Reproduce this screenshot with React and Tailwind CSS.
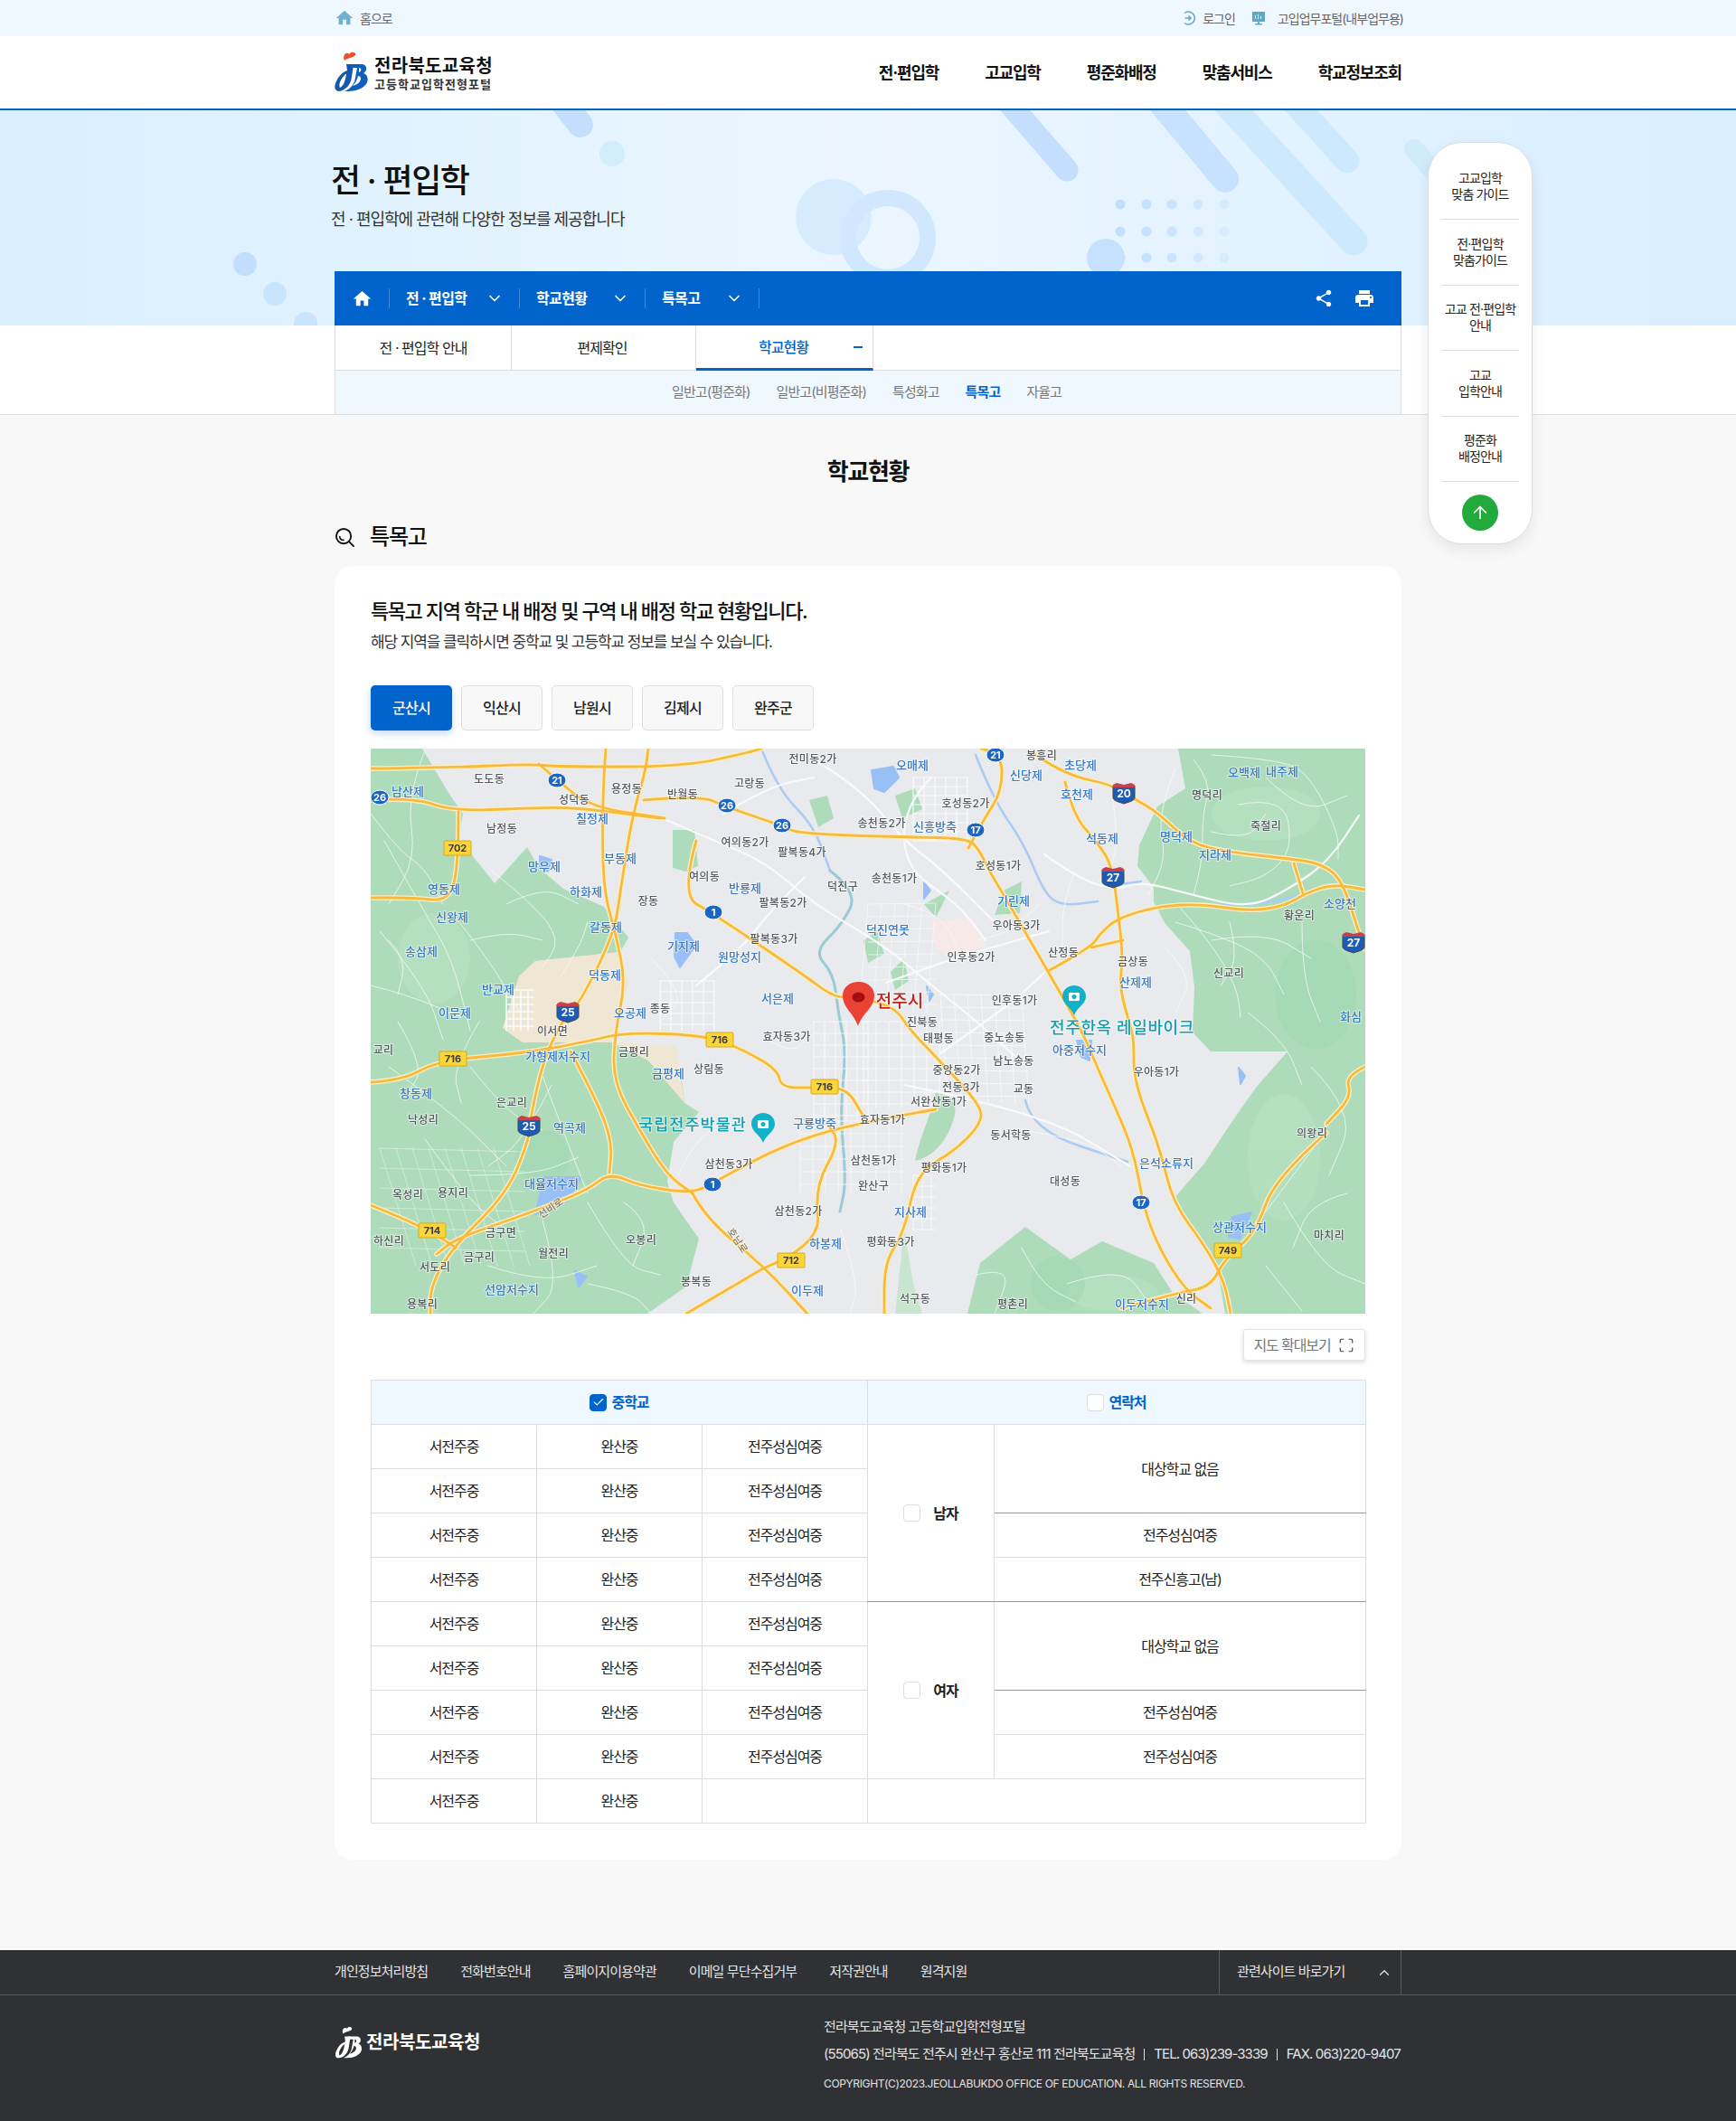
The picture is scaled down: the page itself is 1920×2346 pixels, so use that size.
import { ChevronDown, ChevronUp, ArrowUp, Check, Maximize } from 'lucide-react';
import { MdHome, MdShare, MdLocalPrintshop } from 'react-icons/md';

const SIDE_MENU = [
  ['고교입학', '맞춤 가이드'],
  ['전·편입학', '맞춤가이드'],
  ['고교 전·편입학', '안내'],
  ['고교', '입학안내'],
  ['평준화', '배정안내'],
];

const BREADCRUMB = [
  { label: '전 · 편입학', w: 'w-[144px]' },
  { label: '학교현황', w: 'w-[139px]' },
  { label: '특목고', w: 'w-[126px]' },
];

const FOOTER_LINKS = ['개인정보처리방침', '전화번호안내', '홈페이지이용약관', '이메일 무단수집거부', '저작권안내', '원격지원'];
const CITY_TABS = ['군산시', '익산시', '남원시', '김제시', '완주군'];

// 지도 라벨 (page coordinates, svg viewBox follows the page)
const BLUE_LABELS = [
  ['남산제', 451, 876], ['칠정제', 655, 906], ['망우제', 602, 959], ['부동제', 686, 950], ['하화제', 648, 987],
  ['영동제', 491, 984], ['신왕제', 500, 1015], ['송삼제', 466, 1053], ['갈동제', 670, 1026], ['반룡제', 824, 983],
  ['기지제', 756, 1047], ['원망성지', 818, 1059], ['덕진연못', 982, 1029], ['덕동제', 669, 1079], ['반교제', 551, 1095],
  ['이문제', 503, 1121], ['서은제', 860, 1105], ['오공제', 697, 1121], ['가형제저수지', 617, 1169], ['금평제', 739, 1188],
  ['창동제', 460, 1210], ['역곡제', 630, 1248], ['구룡방죽', 901, 1243], ['신흥방축', 1034, 915], ['오매제', 1009, 847],
  ['초당제', 1195, 847], ['호천제', 1191, 879], ['신당제', 1135, 858], ['오백제', 1376, 855], ['내주제', 1418, 854],
  ['명덕제', 1301, 926], ['석동제', 1219, 928], ['지라제', 1344, 946], ['기린제', 1121, 997], ['소양천', 1482, 1000],
  ['산제제', 1256, 1087], ['화심', 1494, 1125], ['아중저수지', 1194, 1162], ['은석소류지', 1290, 1287], ['지사제', 1007, 1341],
  ['상관저수지', 1371, 1358], ['하봉제', 913, 1376], ['이두제', 893, 1428], ['대율저수지', 610, 1310], ['선암저수지', 566, 1427],
  ['이두저수지', 1263, 1443],
];

const GRAY_LABELS = [
  ['도도동', 541, 862], ['용정동', 693, 873], ['성덕동', 635, 885], ['반월동', 755, 879], ['고랑동', 829, 867],
  ['전미동2가', 899, 840], ['남정동', 555, 917], ['호성동2가', 1068, 889], ['송천동2가', 975, 911], ['여의동2가', 824, 932],
  ['팔복동4가', 887, 943], ['여의동', 779, 970], ['송천동1가', 989, 972], ['덕진구', 932, 981], ['장동', 717, 997],
  ['팔복동2가', 866, 999], ['팔복동3가', 856, 1039], ['인후동2가', 1074, 1059], ['종동', 730, 1116], ['이서면', 611, 1141],
  ['효자동3가', 870, 1147], ['금평리', 701, 1164], ['상림동', 784, 1183], ['은교리', 566, 1220], ['낙성리', 468, 1239],
  ['교리', 424, 1162], ['중앙동2가', 1058, 1184], ['전동3가', 1063, 1203], ['서완산동1가', 1038, 1219], ['효자동1가', 976, 1239],
  ['진북동', 1020, 1131], ['태평동', 1038, 1149], ['봉흥리', 1152, 836], ['명덕리', 1335, 880], ['죽절리', 1400, 914],
  ['호성동1가', 1104, 958], ['우아동3가', 1124, 1024], ['황운리', 1437, 1013], ['산정동', 1176, 1054], ['금상동', 1253, 1064],
  ['신교리', 1359, 1077], ['인후동1가', 1122, 1107], ['우아동1가', 1279, 1186], ['남노송동', 1121, 1174], ['중노송동', 1111, 1148],
  ['교동', 1132, 1205], ['의왕리', 1451, 1254], ['동서학동', 1118, 1256], ['대성동', 1178, 1307], ['삼천동3가', 806, 1288],
  ['삼천동1가', 966, 1284], ['평화동1가', 1044, 1292], ['완산구', 966, 1312], ['삼천동2가', 883, 1340], ['마치리', 1470, 1367],
  ['평화동3가', 985, 1374], ['오봉리', 709, 1372], ['봉복동', 770, 1418], ['석구동', 1012, 1437], ['용복리', 467, 1443],
  ['평촌리', 1120, 1443], ['서도리', 481, 1402], ['금구리', 530, 1391], ['월전리', 612, 1387], ['금구면', 554, 1364],
  ['하신리', 430, 1373], ['옥성리', 451, 1322], ['용지리', 501, 1320], ['신리', 1312, 1437],
];

const ROADS = [
  '410,850 500,849 587,845 614,848 757,848 829,832 842,828',
  '670,828 668,853 666,920 668,987 681,1033 692,1087 680,1143 678,1197 709,1253 738,1300 766,1320',
  '717,828 715,850 699,903 686,987 679,1033 641,1110 628,1119 601,1170 585,1245 585,1260 561,1320 500,1380 476,1423 476,1453',
  '410,885 458,882 503,898 614,892 668,897 730,905',
  '712,885 775,880 802,892 864,913 882,922 1000,926 1070,927 1083,940 1095,965 1115,998 1158,1073 1184,1118 1201,1150 1212,1177 1230,1217 1254,1273 1265,1337 1283,1383 1311,1427 1339,1447',
  '596,845 616,863 654,893 735,905',
  '507,898 507,960 496,997 458,993 410,993',
  '770,930 753,990 788,1010 887,1077 922,1103 945,1103 989,1113 1007,1140 1039,1173 1085,1223 1085,1243 1056,1273 1014,1297 1000,1363 978,1397 978,1453',
  '410,1197 445,1195 485,1173 579,1165 650,1152 690,1142 779,1145 820,1160 860,1183 864,1203 900,1203 936,1203 954,1233',
  '1035,1227 943,1243 865,1267 791,1307 766,1320 709,1312 674,1297 649,1317 582,1343 504,1370 483,1387',
  '766,1320 780,1347 844,1400 893,1453',
  '844,1403 908,1377 901,1313 929,1263 915,1243',
  '844,1403 759,1453',
  '410,1333 469,1357 504,1380',
  '631,1163 660,1217 677,1263 674,1297',
  '1467,1253 1410,1303 1389,1363 1354,1393 1339,1423 1304,1430 1240,1447',
  '1510,1180 1488,1190 1495,1213 1467,1243',
  '1085,828 1108,832 1108,875 1089,905 1071,938',
  '1145,835 1178,857 1230,868 1253,883 1280,898 1316,933 1362,943 1428,950 1460,955 1484,972 1503,1032 1510,1050',
  '1178,865 1187,902 1214,932 1230,958 1237,1012 1242,1058 1238,1092 1250,1135 1254,1150 1254,1197 1283,1270 1297,1330 1332,1377 1354,1417 1361,1453',
  '1161,1073 1207,1048 1217,1032 1237,1015 1283,1002 1329,1000 1382,1008 1421,1002 1444,988 1474,978 1510,984',
  '1431,955 1441,988',
  '1207,1048 1242,1040',
];

const WATER = [
  '842,828 860,873 900,913 918,963',
  '1079,835 1099,885 1132,932 1155,988 1174,1002 1214,997',
  '1134,1217 1141,1250 1247,1285',
  '1225,980 1262,975',
  '1438,990 1400,1000 1350,1000',
];

const RIVER = '918,963 949,987 931,1023 900,1053 922,1077 927,1120 936,1163 929,1230 936,1307 929,1340';

const WHITE_MAJOR = [
  '735,906 790,930 846,953 900,1000 980,1047 1030,1090 1075,1125 1130,1175',
  '980,1087 1040,1065 1100,1047 1160,1030',
  '1158,1073 1130,1100 1090,1130 1040,1165',
  '1155,945 1187,968 1230,985 1263,975 1312,988 1381,1005 1428,982 1470,952 1503,902',
  '1030,860 1000,890 1000,960 1060,1000 1090,1040',
  '900,840 950,870 1000,930 1040,960 1100,1020',
  '800,900 850,870 900,860',
  '1000,1200 1150,1230 1250,1290',
  '770,1090 820,1050 850,1010 890,970',
];

const WHITE_MINOR = [
  '1306,1005 1339,1042 1368,1092 1372,1125', '1340,835 1420,840 1450,860 1480,920 1480,950',
  '1320,840 1340,865 1330,900 1330,950 1320,990', '1300,850 1280,900 1290,950 1270,990',
  '1370,890 1420,880 1430,940 1400,970 1360,980', '1300,1020 1350,1035 1400,1060 1420,1100',
  '1440,1020 1440,1080 1460,1130', '1187,968 1175,1000 1175,1050', '1230,880 1240,940 1215,975',
  '1150,1000 1120,1030 1080,1040', '1450,1180 1500,1230 1470,1300', '1420,1330 1460,1400 1510,1420',
  '1080,1410 1120,1400 1100,1453', '1180,1420 1240,1400 1270,1440', '1400,1400 1440,1450',
  '470,830 450,880 460,950 430,1000', '425,930 470,1010 500,1060 520,1140', '500,1010 540,1060 575,1120',
  '420,1030 470,1090 490,1150', '540,960 590,1000 620,1040 600,1070', '560,1000 600,980 640,1000',
  '410,1090 450,1100 510,1125', '430,1180 500,1230 560,1290', '520,1180 560,1230 600,1250',
  '600,1190 630,1270 650,1320', '650,1330 690,1400 730,1410', '540,1400 600,1420 660,1400',
  '600,1350 620,1420 590,1453', '520,1300 590,1300 640,1280', '470,1260 520,1330 560,1360',
  '720,1060 760,1100 730,1130', '930,1360 950,1420 940,1453', '800,1240 770,1260 750,1300',
  '1130,1250 1200,1260 1240,1290', '1000,1000 1040,1010 1060,1050', '850,1150 880,1170 900,1130',
  '410,900 440,940 470,960 490,1000', '430,1040 450,1060 440,1100', '520,1040 560,1030 600,1040',
  '530,1130 500,1180 510,1220', '440,1130 470,1180 450,1210', '610,1200 580,1260 540,1290',
  '620,1080 640,1050 650,1020', '690,1330 720,1350 700,1400', '650,1420 700,1430 720,1453',
  '1340,1040 1400,1030 1450,1060', '1380,1120 1420,1150 1440,1200', '1460,1260 1430,1300 1400,1340',
  '1490,1320 1450,1330 1430,1380', '1360,1020 1370,1060 1350,1090', '1400,860 1440,900 1490,880',
  '1340,920 1380,930 1400,900', '1290,1050 1320,1080 1300,1120', '1130,1380 1150,1420 1190,1440',
];

const grid = (x0, y0, x1, y1, sx, sy, skew = 0) => {
  let d = '';
  for (let x = x0; x <= x1; x += sx) d += `M${x} ${y0}L${x + skew} ${y1}`;
  for (let y = y0; y <= y1; y += sy) d += `M${x0} ${y}L${x1 + skew * 0.5} ${y + skew * 0.1}`;
  return d;
};

const curve = (s) => {
  const p = s.split(' ').map((q) => q.split(',').map(Number));
  let d = `M${p[0][0]} ${p[0][1]}`;
  for (let i = 1; i < p.length - 1; i++) {
    const mx = (p[i][0] + p[i + 1][0]) / 2;
    const my = (p[i][1] + p[i + 1][1]) / 2;
    d += `Q${p[i][0]} ${p[i][1]} ${mx} ${my}`;
  }
  const last = p[p.length - 1];
  return `${d}L${last[0]} ${last[1]}`;
};

function Logo({ white = false }) {
  return (
    <svg viewBox="0 0 37 44" className="w-[37px] h-[44px] shrink-0">
      <path d="M11 10C9 6 11 1 15 2C16 3 17 3 18 1C22 0 25 3 22 5C19 7 14 7 11 10Z" fill={white ? '#fff' : '#e8502a'} />
      <path d="M13 14H21L19 28C18 37 12 43 5 44C0 44 -1 39 2 33C5 26 9 23 14 21Z" fill={white ? '#fff' : '#1557ad'} />
      <path d="M12 25C7 30 4 36 6 40C10 38 12 32 13 25Z" fill={white ? '#303134' : '#fff'} />
      <path d="M18 14H30C36 14 37 21 32 24C38 26 38 34 33 38C28 43 20 44 11 44C18 41 22 36 23 29L25 18H18Z" fill={white ? '#fff' : '#0f5fbd'} />
      <path d="M26 27C29 27 30 30 28 33C27 35 24 37 20 38C23 35 25 31 26 27Z" fill={white ? '#303134' : '#fff'} />
      <path d="M27 18C30 18 30 22 27 23Z" fill={white ? '#303134' : '#fff'} />
    </svg>
  );
}

function HeroShapes() {
  const xs = [1239, 1268, 1296, 1325, 1354];
  const ops = [0.9, 0.8, 0.65, 0.45, 0.3];
  return (
    <svg viewBox="0 122 1920 238" className="absolute inset-0 w-full h-full" fill="none" strokeLinecap="round">
      <path d="M612 100L642 138" stroke="#c3dffd" strokeWidth="28" />
      <circle cx="677" cy="170" r="14" fill="#d2ecfc" />
      <circle cx="922" cy="240" r="42" fill="#d6ebfd" />
      <circle cx="982" cy="263" r="44" stroke="#d1e7fd" strokeWidth="18" />
      <path d="M1095 90L1180 188" stroke="#c4dffd" strokeWidth="25" />
      <path d="M1265 90L1355 198" stroke="#c6e2fe" strokeWidth="30" />
      <path d="M1335 90L1497 267" stroke="#cde9fd" strokeWidth="31" />
      <path d="M1410 90L1490 178" stroke="#cde9fd" strokeWidth="27" />
      <path d="M1564 165L1640 250" stroke="#cfebfc" strokeWidth="22" />
      {[226, 256, 285].flatMap((y) =>
        xs.map((x, i) => <circle key={`${x}-${y}`} cx={x} cy={y} r="5.5" fill="#bcdcfd" opacity={ops[i]} />)
      )}
      <circle cx="1223" cy="285" r="21" fill="#c6e1fd" />
      <circle cx="271" cy="292" r="13" fill="#c2defd" />
      <circle cx="304" cy="325" r="13" fill="#c9e4fd" />
      <circle cx="338" cy="358" r="13" fill="#c9e4fd" />
    </svg>
  );
}

const Circle = ({ x, y, n }) => (
  <g>
    <ellipse cx={x} cy={y} rx="10" ry="8" fill="#1a66c2" stroke="#fff" strokeWidth="1" />
    <text x={x} y={y + 4} textAnchor="middle" fontSize="11" fontWeight="700" fill="#fff">{n}</text>
  </g>
);

const Shield = ({ x, y, n }) => (
  <g>
    <path d={`M${x - 12} ${y - 8}H${x + 12}V${y + 5}C${x + 12} ${y + 9} ${x + 5} ${y + 10} ${x} ${y + 12}C${x - 5} ${y + 10} ${x - 12} ${y + 9} ${x - 12} ${y + 5}Z`} fill="#1d5cb4" stroke="#444" strokeWidth="1" />
    <path d={`M${x - 12} ${y - 6}V${y - 9}L${x - 8} ${y - 11}L${x} ${y - 9}L${x + 8} ${y - 11}L${x + 12} ${y - 9}V${y - 6}Z`} fill="#c8404a" />
    <text x={x} y={y + 5} textAnchor="middle" fontSize="12" fontWeight="700" fill="#fff">{n}</text>
  </g>
);

const RouteBox = ({ x, y, n }) => (
  <g>
    <rect x={x - 15} y={y - 8} width="30" height="16" rx="1" fill="#fcd53a" stroke="#d9aa10" strokeWidth="1" />
    <text x={x} y={y + 4} textAnchor="middle" fontSize="11" fontWeight="700" fill="#3c3c3c">{n}</text>
  </g>
);

const TealPin = ({ x, y }) => (
  <g>
    <path d={`M${x} ${y + 19}C${x - 3} ${y + 10} ${x - 13} ${y + 7} ${x - 13} ${y - 2}C${x - 13} ${y - 9} ${x - 7} ${y - 14} ${x} ${y - 14}C${x + 7} ${y - 14} ${x + 13} ${y - 9} ${x + 13} ${y - 2}C${x + 13} ${y + 7} ${x + 3} ${y + 10} ${x} ${y + 19}Z`} fill="#12b0c9" />
    <rect x={x - 6} y={y - 6} width="12" height="9" rx="1" fill="#fff" />
    <circle cx={x} cy={y - 1.5} r="2.5" fill="#12b0c9" />
  </g>
);

function MapDrawing() {
  return (
    <svg viewBox="410 828 1100 625" className="block w-[1100px] h-[625px] blur-[0.4px]">
      <rect x="410" y="828" width="1100" height="625" fill="#e8eaed" />

      {/* 녹지 */}
      <g fill="#aedcbb">
        <path d="M410 828H467L498 880L512 900L507 927L547 977L583 937L596 960L623 983L668 1003L695 1037L686 1053L592 1063L574 1080L556 1137L578 1153L677 1153L717 1173L753 1187L757 1220L773 1230L745 1263L738 1307L745 1330L773 1370L759 1423L716 1453H410Z" />
        <path d="M1303 828H1510V1453H1355L1346 1400L1318 1363L1297 1327L1332 1287L1361 1243L1389 1203L1424 1163L1339 1163L1319 1142L1321 1092L1316 1052L1289 1022L1276 998L1276 982L1258 958L1260 935L1280 892L1311 872Z" />
        <path d="M1070 1453L1084 1397L1134 1357L1184 1393L1219 1373L1276 1397L1297 1430L1330 1453Z" />
        <path d="M1035 1207C1050 1210 1062 1220 1054 1240C1046 1265 1030 1280 1012 1284C1016 1260 1030 1235 1035 1207Z" />
        <path d="M744 918H768L772 958L758 964L744 960Z" />
        <path d="M895 885L915 880L922 905L905 915Z" />
        <path d="M990 880L1012 872L1020 895L998 905Z" />
        <path d="M1110 985L1130 975L1128 1010L1100 1012Z" />
        <path d="M955 1040L970 1030L978 1055L960 1065Z" />
        <path d="M985 1075L1000 1060L1005 1085L990 1095Z" />
        <path d="M1022 1000L1050 985L1035 1015Z" />
        <path d="M1000 1360L1010 1420L1020 1453H990Z" fill="#c8e6cf" />
      </g>
      <g fill="#bde4c6" opacity="0.45">
        <ellipse cx="1420" cy="1280" rx="40" ry="70" />
        <ellipse cx="1400" cy="900" rx="60" ry="30" />
        <ellipse cx="1230" cy="1430" rx="50" ry="20" />
        <ellipse cx="480" cy="1060" rx="40" ry="50" />
      </g>
      <g fill="#9bd4ac" opacity="0.4">
        <ellipse cx="1455" cy="1100" rx="45" ry="60" />
        <ellipse cx="1170" cy="1420" rx="30" ry="30" />
        <ellipse cx="600" cy="1280" rx="30" ry="30" />
      </g>
      <path d="M592 1063L686 1053L695 1087L677 1153L748 1157L757 1220L717 1173L677 1153L578 1153L556 1137L574 1080Z" fill="#efe6d3" />
      <path d="M1030 1020L1075 1015L1090 1045L1060 1060L1035 1050Z" fill="#f7e9e8" />

      {/* 물 */}
      <g fill="none" strokeLinecap="round" strokeLinejoin="round" stroke="#a9ccf7">
        {WATER.map((w) => <path key={w} d={curve(w)} strokeWidth="2.5" />)}
        <path d={curve(RIVER)} stroke="#98ccd2" strokeWidth="3" />
      </g>
      <g fill="#98c0f6" stroke="#98c0f6" strokeWidth="2" strokeLinejoin="round">
        <path d="M964 852L988 848L994 860L978 876L967 872Z" />
        <path d="M747 1032L760 1032L770 1045L752 1070L746 1058Z" />
        <path d="M597 947L610 951L606 964L597 959Z" />
        <path d="M602 1302L643 1302L628 1328L592 1343Z" />
        <path d="M636 1406L649 1412L640 1424Z" />
        <path d="M1363 1346L1384 1341L1371 1370L1359 1368Z" />
        <path d="M1191 1151L1207 1151L1205 1173L1196 1169Z" />
        <path d="M1370 1181L1377 1190L1372 1199Z" />
        <path d="M1022 976L1029 985L1022 994Z" />
        <path d="M1025 1091L1032 1100L1028 1107Z" />
      </g>

      {/* 도로망 */}
      <g fill="none" stroke="#f8fafb" strokeLinecap="round" strokeLinejoin="round">
        <path d={grid(960, 1000, 1040, 1120, 15, 14, -10)} strokeWidth="1" opacity="0.7" />
        <path d={grid(1040, 1100, 1130, 1220, 15, 14, 8)} strokeWidth="1" opacity="0.8" />
        <path d={grid(900, 1130, 960, 1240, 12, 13)} strokeWidth="1.2" opacity="0.85" />
        <path d={grid(955, 1130, 1040, 1225, 14, 13)} strokeWidth="1.2" opacity="0.85" />
        <path d={grid(885, 1240, 1000, 1320, 14, 14)} strokeWidth="1" opacity="0.8" />
        <path d={grid(1010, 1300, 1035, 1360, 10, 12)} strokeWidth="1" opacity="0.85" />
        <path d={grid(1010, 860, 1070, 930, 12, 10)} strokeWidth="1.2" />
        <path d={grid(730, 1085, 790, 1140, 12, 12)} strokeWidth="1.2" />
        <path d={grid(560, 1095, 590, 1140, 8, 8)} strokeWidth="1.6" />
        <path d={grid(420, 1270, 560, 1400, 18, 22, 40)} strokeWidth="0.8" opacity="0.55" />
        {WHITE_MAJOR.map((w) => <path key={w} d={curve(w)} strokeWidth="2.2" />)}
        {WHITE_MINOR.map((w) => <path key={w} d={curve(w)} strokeWidth="1" opacity="0.75" />)}
      </g>

      <g fill="none" strokeLinecap="round" strokeLinejoin="round">
        {ROADS.map((r) => <path key={r} d={curve(r)} stroke="#fcefc3" strokeWidth="5.5" />)}
        {ROADS.map((r) => <path key={`o${r}`} d={curve(r)} stroke="#f7ba3e" strokeWidth="2.8" />)}
      </g>

      <g style={{ paintOrder: 'stroke' }} stroke="#ffffff" strokeOpacity="0.55" strokeWidth="2" textAnchor="middle" fontWeight="500">
        {BLUE_LABELS.map(([t, x, y]) => (
          <text key={t + x} x={x} y={y + 4} fontSize="13" fill="#3a79c8">{t}</text>
        ))}
        {GRAY_LABELS.map(([t, x, y]) => (
          <text key={t + x} x={x} y={y + 4} fontSize="12" letterSpacing="0.3" fill="#555b60">{t}</text>
        ))}
        <text x="609" y="1340" fontSize="11" fill="#8c7a55" transform="rotate(-35 609 1336)">선비로</text>
        <text x="816" y="1376" fontSize="11" fill="#8c7a55" transform="rotate(55 816 1372)">호남로</text>
        <text x="766" y="1250" fontSize="17.5" letterSpacing="1" fill="#129eaf">국립전주박물관</text>
        <text x="1241" y="1143" fontSize="18" letterSpacing="0.6" fill="#129eaf">전주한옥 레일바이크</text>
        <text x="995" y="1114" fontSize="19" fill="#c5221f">전주시</text>
      </g>

      <Circle x={616} y={863} n="21" />
      <Circle x={420} y={882} n="26" />
      <Circle x={804} y={891} n="26" />
      <Circle x={865} y={913} n="26" />
      <Circle x={1079} y={918} n="17" />
      <Circle x={1101} y={835} n="21" />
      <Circle x={789} y={1009} n="1" />
      <Circle x={788} y={1310} n="1" />
      <Circle x={1262} y={1330} n="17" />
      <Shield x={628} y={1119} n="25" />
      <Shield x={585} y={1245} n="25" />
      <Shield x={1243} y={877} n="20" />
      <Shield x={1231} y={970} n="27" />
      <Shield x={1497} y={1042} n="27" />
      <RouteBox x={506} y={938} n="702" />
      <RouteBox x={796} y={1150} n="716" />
      <RouteBox x={501} y={1171} n="716" />
      <RouteBox x={912} y={1202} n="716" />
      <RouteBox x={478} y={1361} n="714" />
      <RouteBox x={875} y={1394} n="712" />
      <RouteBox x={1358} y={1383} n="749" />
      <TealPin x={844} y={1245} />
      <TealPin x={1188} y={1104} />
      <path d="M949 1135C944 1120 932 1115 932 1101C932 1092 940 1086 949.5 1086C959 1086 967 1092 967 1101C967 1115 954 1120 949 1135Z" fill="#ea4335" />
      <ellipse cx="949.5" cy="1103" rx="7" ry="5.5" fill="#a50e0e" />
    </svg>
  );
}

function CheckBox({ checked = false }) {
  return (
    <span className={`w-[19px] h-[19px] rounded-[4px] border flex items-center justify-center ${checked ? 'bg-[#0064cc] border-[#0064cc]' : 'bg-white border-[#ddd]'}`}>
      {checked && <Check size={14} color="#fff" strokeWidth={2} />}
    </span>
  );
}

function SchoolTable() {
  const cell = 'h-[49px] p-0 border border-[#ddd] text-center text-[16px] tracking-[-0.065em] text-[#222] font-normal';
  const school = (
    <>
      <td className={cell}>서전주중</td>
      <td className={cell}>완산중</td>
      <td className={cell}>전주성심여중</td>
    </>
  );
  return (
    <table className="mt-[21px] w-[1100px] table-fixed border-collapse">
      <colgroup>
        <col className="w-[183px]" />
        <col className="w-[183px]" />
        <col className="w-[183px]" />
        <col className="w-[140px]" />
        <col className="w-[411px]" />
      </colgroup>
      <thead>
        <tr className="bg-[#f0f8ff]">
          <th colSpan={3} className={cell}>
            <span className="flex items-center justify-center gap-[5px] text-[#0064cc] font-bold">
              <CheckBox checked />
              중학교
            </span>
          </th>
          <th colSpan={2} className={cell}>
            <span className="flex items-center justify-center gap-[5px] text-[#0064cc] font-bold">
              <CheckBox />
              연락처
            </span>
          </th>
        </tr>
      </thead>
      <tbody>
        <tr>
          {school}
          <td rowSpan={4} className={`${cell} border-b-[#999]`}>
            <span className="flex items-center justify-center gap-[14px] font-bold"><CheckBox />남자</span>
          </td>
          <td rowSpan={2} className={`${cell} border-b-[#999]`}>대상학교 없음</td>
        </tr>
        <tr>{school}</tr>
        <tr>{school}<td className={cell}>전주성심여중</td></tr>
        <tr>{school}<td className={`${cell} border-b-[#999]`}>전주신흥고(남)</td></tr>
        <tr>
          {school}
          <td rowSpan={4} className={cell}>
            <span className="flex items-center justify-center gap-[14px] font-bold"><CheckBox />여자</span>
          </td>
          <td rowSpan={2} className={`${cell} border-b-[#999]`}>대상학교 없음</td>
        </tr>
        <tr>{school}</tr>
        <tr>{school}<td className={cell}>전주성심여중</td></tr>
        <tr>{school}<td className={cell}>전주성심여중</td></tr>
        <tr>
          <td className={cell}>서전주중</td>
          <td className={cell}>완산중</td>
          <td className={cell}></td>
          <td colSpan={2} className={cell}></td>
        </tr>
      </tbody>
    </table>
  );
}

export default function App() {
  return (
    <div className="relative bg-[#f8f8f8] font-['Inter','Noto_Sans_CJK_KR',sans-serif] text-[#222] overflow-hidden">
      {/* 상단 유틸 */}
      <div className="h-10 bg-[#eff8ff]">
        <div className="ml-[370px] w-[1182px] h-full flex items-center justify-between text-[14px] tracking-[-0.07em] text-[#666]">
          <div className="flex items-center gap-[6px]">
            <MdHome size={22} color="#6fb1cf" />
            <span>홈으로</span>
          </div>
          <div className="flex items-center">
            <svg viewBox="0 0 18 18" className="w-[18px] h-[18px] mr-[7px]" fill="none" stroke="#5ba9c9" strokeWidth="1.5">
              <path d="M5 3.5A7 7 0 1 1 5 14.5" />
              <path d="M5.5 9H12M9.5 6.5L12 9L9.5 11.5" />
            </svg>
            <span>로그인</span>
            <svg viewBox="0 0 18 18" className="w-[18px] h-[18px] ml-[17px] mr-[12px]" fill="#5ba9c9">
              <path d="M2 2H16V13H2ZM8 13H10V15H13V16.5H5V15H8Z" />
              <path d="M5 10V6H6V10ZM8 10V5H9V10ZM11 10V7H12V10Z" fill="#eff8ff" />
            </svg>
            <span>고입업무포털(내부업무용)</span>
          </div>
        </div>
      </div>

      {/* 헤더 */}
      <header className="h-[82px] bg-white border-b-2 border-[#0064cc]">
        <div className="ml-[370px] w-[1180px] h-full flex items-center justify-between">
          <div className="flex items-center gap-[7px] -mt-[2px]">
            <Logo />
            <div className="whitespace-nowrap pt-[3px]">
              <div className="text-[20px] leading-[24px] font-bold tracking-[0.015em] text-[#111]">전라북도교육청</div>
              <div className="text-[13px] leading-[16px] font-bold tracking-[0.08em] text-[#333]">고등학교입학전형포털</div>
            </div>
          </div>
          <nav className="flex items-center gap-[51px] text-[18px] font-bold tracking-[-0.065em] text-[#111]">
            <span>전·편입학</span>
            <span>고교입학</span>
            <span>평준화배정</span>
            <span>맞춤서비스</span>
            <span>학교정보조회</span>
          </nav>
        </div>
      </header>

      {/* 히어로 */}
      <section className="relative h-[238px] bg-gradient-to-r from-[#d9effe] via-[#ebf6ff] to-[#d9eeff]">
        <HeroShapes />
        <div className="relative ml-[370px] w-[1180px] h-full flex flex-col">
          <h1 className="mt-[56px] -ml-[4px] text-[36px] leading-[44px] font-medium tracking-[-0.04em] text-[#111]">전 · 편입학</h1>
          <p className="mt-[8px] -ml-[4px] text-[18px] leading-[26px] tracking-[-0.055em] text-[#333]">전 · 편입학에 관련해 다양한 정보를 제공합니다</p>
          <div className="mt-auto h-[60px] bg-[#0064cc] flex items-center text-white">
            <div className="w-[61px] h-[22px] flex items-center justify-center border-r border-[#3f8bda]">
              <MdHome size={23} color="#fff" />
            </div>
            {BREADCRUMB.map((b) => (
              <div key={b.label} className={`${b.w} h-[22px] pl-[18px] pr-[17px] flex items-center justify-between border-r border-[#3f8bda] text-[16px] font-bold tracking-[-0.04em]`}>
                <span>{b.label}</span>
                <ChevronDown size={20} color="#fff" strokeWidth={2} />
              </div>
            ))}
            <div className="ml-auto flex items-center gap-[22px] pr-[29px]">
              <MdShare size={22} color="#fff" />
              <MdLocalPrintshop size={24} color="#fff" />
            </div>
          </div>
        </div>
      </section>

      {/* 탭 */}
      <section className="bg-white border-b border-[#ddd] h-[99px]">
        <div className="ml-[370px] w-[1180px] h-full border-x border-[#ddd] flex flex-col">
          <div className="h-[50px] border-b border-[#ddd] flex text-[16px] leading-[26px] tracking-[-0.06em]">
            <div className="w-[195px] flex items-center justify-center border-r border-[#ddd]">전 · 편입학 안내</div>
            <div className="w-[204px] flex items-center justify-center border-r border-[#ddd] pr-[3px]">편제확인</div>
            <div className="relative w-[196px] flex items-center justify-center border-r border-b-[3px] border-r-[#ddd] border-b-[#0064cc] h-[50px] pr-[2px] font-medium text-[#0064cc]">
              학교현황
              <span className="absolute right-[11px] top-[23px] w-[10px] h-[2px] bg-[#0064cc]"></span>
            </div>
          </div>
          <div className="flex-1 bg-[#f0f8ff] flex items-center justify-center gap-[29px] pr-[3px] text-[15px] tracking-[-0.06em] text-[#777]">
            <span>일반고(평준화)</span>
            <span>일반고(비평준화)</span>
            <span>특성화고</span>
            <span className="text-[#0064cc] font-bold">특목고</span>
            <span>자율고</span>
          </div>
        </div>
      </section>

      {/* 본문 */}
      <main className="ml-[370px] w-[1180px]">
        <h2 className="pt-[48px] text-center text-[26px] leading-[30px] font-bold tracking-[-0.05em] text-[#111]">학교현황</h2>
        <div className="mt-[42px] h-[30px] flex items-center gap-[16px]">
          <svg viewBox="0 0 24 24" className="w-[23px] h-[23px]" fill="none" stroke="#111" strokeWidth="2" strokeLinecap="round">
            <circle cx="10.5" cy="10.5" r="8.5" />
            <path d="M16.5 16.5L22 22" />
            <path d="M6 11A4.5 4.5 0 0 0 10.5 15" strokeWidth="1.6" />
          </svg>
          <span className="text-[24px] font-medium tracking-[-0.05em] text-[#111]">특목고</span>
        </div>

        <div className="mt-[17px] bg-white rounded-[20px] pt-[35px] pb-[40px] pl-[40px] pr-[40px]">
          <p className="text-[22px] leading-[30px] font-medium tracking-[-0.065em] text-[#111]">특목고 지역 학군 내 배정 및 구역 내 배정 학교 현황입니다.</p>
          <p className="mt-[7px] text-[17px] leading-[24px] tracking-[-0.065em] text-[#333]">해당 지역을 클릭하시면 중학교 및 고등학교 정보를 보실 수 있습니다.</p>

          <div className="mt-[36px] flex gap-[10px]">
            {CITY_TABS.map((t, i) => (
              <button
                key={t}
                className={`w-[90px] h-[50px] rounded-[5px] text-[16px] font-medium tracking-[-0.05em] ${
                  i === 0
                    ? 'bg-[#0064cc] text-white shadow-[0_3px_8px_rgba(0,100,204,0.25)]'
                    : 'bg-[#f8f8f8] border border-[#ddd] text-[#222]'
                }`}
              >
                {t}
              </button>
            ))}
          </div>

          <div className="mt-[20px]">
            <MapDrawing />
          </div>

          <div className="mt-[17px] w-[1100px] flex justify-end">
            <div className="w-[135px] h-[35px] flex items-center justify-center gap-[9px] bg-white border border-[#e5e5e5] rounded-[3px] shadow-[0_2px_5px_rgba(0,0,0,0.15)] text-[16px] tracking-[-0.07em] text-[#777]">
              지도 확대보기
              <Maximize size={18} color="#444" strokeWidth={1.6} />
            </div>
          </div>

          <SchoolTable />
        </div>
      </main>

      {/* 푸터 */}
      <footer className="mt-[100px] h-[189px] bg-[#303134] text-[#e4e4e4]">
        <div className="h-[50px] border-b border-[#58595c]">
          <div className="ml-[370px] w-[1180px] h-full flex items-center justify-between">
            <div className="flex gap-[36px] text-[15px] tracking-[-0.06em]">
              {FOOTER_LINKS.map((l) => <span key={l}>{l}</span>)}
            </div>
            <div className="w-[202px] h-full pl-[19px] pr-[9px] flex items-center justify-between border-x border-[#58595c] text-[15px] tracking-[-0.06em]">
              관련사이트 바로가기
              <ChevronUp size={18} color="#e4e4e4" strokeWidth={1.6} />
            </div>
          </div>
        </div>
        <div className="ml-[370px] w-[1180px] flex">
          <div className="w-[541px] shrink-0 pt-[3px] flex items-center h-[100px] gap-[1px]">
            <div className="scale-[0.8] -ml-[3px]"><Logo white /></div>
            <span className="text-[20px] font-bold tracking-[-0.02em] text-white">전라북도교육청</span>
          </div>
          <div className="whitespace-nowrap">
            <p className="mt-[24px] text-[15px] leading-[22px] tracking-[-0.06em]">전라북도교육청 고등학교입학전형포털</p>
            <p className="mt-[8px] text-[15px] leading-[22px] tracking-[-0.06em] flex items-center">
              (55065) 전라북도 전주시 완산구 홍산로 111 전라북도교육청
              <span className="mx-[10px] w-px h-[13px] bg-[#ddd]"></span>
              TEL. 063)239-3339
              <span className="mx-[10px] w-px h-[13px] bg-[#ddd]"></span>
              FAX. 063)220-9407
            </p>
            <p className="mt-[11px] text-[12px] leading-[22px] tracking-[-0.03em]">COPYRIGHT(C)2023.JEOLLABUKDO OFFICE OF EDUCATION. ALL RIGHTS RESERVED.</p>
          </div>
        </div>
      </footer>

      {/* 퀵메뉴 */}
      <aside className="absolute left-[1579px] top-[157px] w-[116px] h-[445px] bg-white border border-[#ddd] rounded-[38px] shadow-[0_6px_16px_rgba(0,0,0,0.08)] flex flex-col items-center">
        {SIDE_MENU.map(([a, b], i) => (
          <div
            key={a}
            className={`w-[86px] border-b border-[#ddd] flex flex-col items-center justify-center text-[14px] leading-[18px] tracking-[-0.06em] text-[#222] whitespace-nowrap ${i === 0 ? 'h-[85px] pt-[11px]' : 'h-[72.5px]'}`}
          >
            <span>{a}</span>
            <span>{b}</span>
          </div>
        ))}
        <div className="flex-1 flex items-center justify-center">
          <span className="w-10 h-10 rounded-full bg-[#22aa3c] flex items-center justify-center">
            <ArrowUp size={22} color="#fff" strokeWidth={1.8} />
          </span>
        </div>
      </aside>
    </div>
  );
}
